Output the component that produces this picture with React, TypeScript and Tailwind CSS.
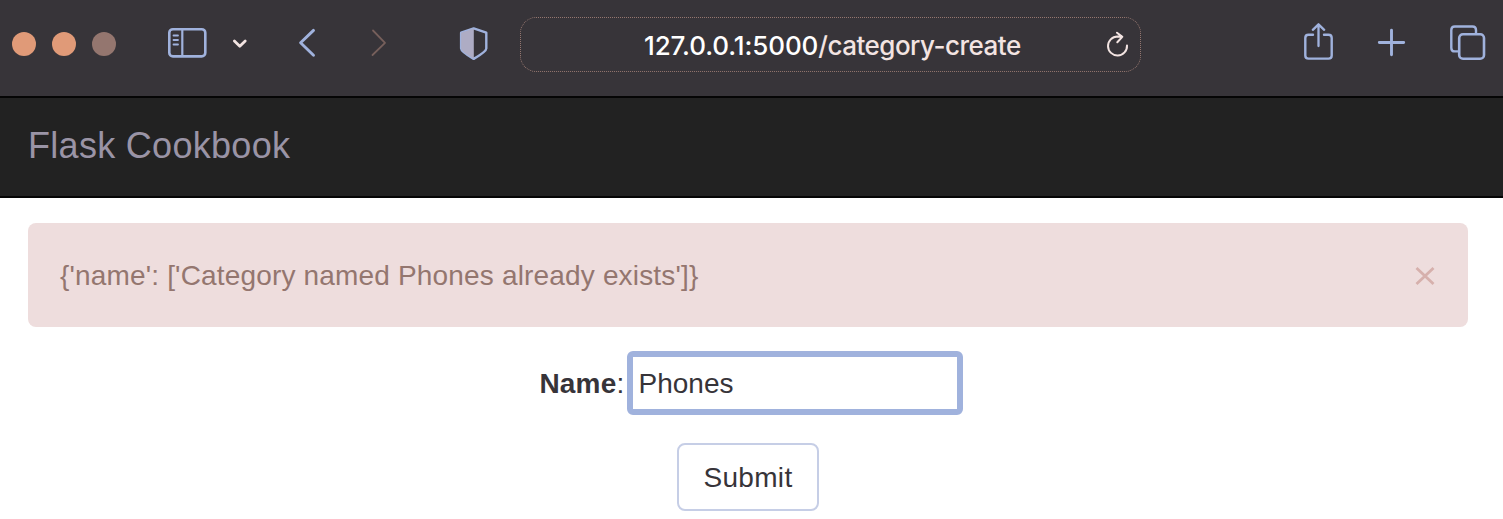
import React from "react";

type GlyphProps = {
  viewBox: string;
  className: string;
  label: string;
  children: React.ReactNode;
};

function Glyph({ viewBox, className, label, children }: GlyphProps) {
  return (
    <svg
      viewBox={viewBox}
      className={`h-[96px] shrink-0 ${className}`}
      fill="none"
      stroke="currentColor"
      strokeLinecap="round"
      strokeLinejoin="round"
      aria-label={label}
    >
      {children}
    </svg>
  );
}

function Toolbar() {
  return (
    <header className="flex h-[96px] items-center bg-[#373439] text-[#a0b2dd]">
      <div className="ml-3 flex -translate-y-1 gap-4">
        <span className="size-6 rounded-full bg-[#e09a78]" />
        <span className="size-6 rounded-full bg-[#e09a78]" />
        <span className="size-6 rounded-full bg-[#94766f]" />
      </div>
      <Glyph label="Sidebar" viewBox="160 0 56 96" className="ml-[44px] w-[56px]">
        <rect x="169.3" y="29.2" width="36" height="27.2" rx="3.6" strokeWidth="2.6" />
        <path d="M182.3 30v26" strokeWidth="2.2" />
        <path d="M173.5 35.5h4.5M173.5 40h4.5M173.5 44.5h4.5" strokeWidth="1.8" />
      </Glyph>
      <Glyph label="Tab groups" viewBox="216 0 48 96" className="w-[48px] text-[#f3e4e2]">
        <path d="M234.4 41l5.4 5.3 5.4-5.3" strokeWidth="2.8" />
      </Glyph>
      <Glyph label="Back" viewBox="280 0 60 96" className="ml-4 w-[60px]">
        <path d="M313.5 30.4L300.6 42.8 313.5 55.2" strokeWidth="2.9" />
      </Glyph>
      <Glyph label="Forward" viewBox="340 0 80 96" className="w-[80px] text-[#765f5b]">
        <path d="M373 30.5L385 42.8 372.5 55" strokeWidth="1.8" />
      </Glyph>
      <Glyph label="Privacy report" viewBox="440 0 60 96" className="ml-5 w-[60px]">
        <path d="M473.7 28.4L486.3 32.7V48.5q0 3-12.6 10.4Q461.1 51.5 461.1 48.5V32.7z" strokeWidth="2.4" />
        <path d="M473.8 28.6V58.7Q461.2 51.5 461.2 48.5V32.7z" fill="#aeacc4" stroke="none" />
      </Glyph>
      <div className="mb-[7px] ml-5 flex h-[55px] w-[621px] shrink-0 items-center rounded-2xl border border-dotted border-[#94766f]">
        <span className="ml-[123px] w-[378px] translate-y-px whitespace-nowrap font-['Inter','Liberation_Sans',sans-serif] text-[26px] font-medium leading-9 text-[#f3e4e2]">
          <span className="tracking-[-0.1px] text-white">127.0.0.1:5000</span>
          <span className="tracking-[-0.5px]">/category-create</span>
        </span>
        <svg viewBox="1100 24 36 40" className="ml-[78px] h-[40px] w-[36px] text-[#f3e4e2]" fill="none" stroke="currentColor" strokeWidth="2" strokeLinecap="round" strokeLinejoin="round" aria-label="Reload">
          <path d="M1127 44.5A9.5 9.5 0 1 1 1117.5 35.500L1122.300 35.700M1117 31.700L1122.300 35.900 1117.300 41.200" />
        </svg>
      </div>
      <Glyph label="Share" viewBox="1290 0 56 96" className="ml-[149px] w-[56px]">
        <path d="M1313 34.8h-4.5q-3.200 0-3.200 3.200v17.400q0 3.200 3.200 3.200h20q3.200 0 3.200-3.200V38q0-3.200-3.200-3.200h-4.500" strokeWidth="2.4" />
        <path d="M1318.5 46V25M1312.800 29.800l5.700-5.500 5.700 5.500" strokeWidth="2.3" />
      </Glyph>
      <Glyph label="New tab" viewBox="1366 0 50 96" className="ml-5 w-[50px]">
        <path d="M1379.3 42.5h24.400M1391.500 30.300v24.400" strokeWidth="2.9" />
      </Glyph>
      <Glyph label="Tab overview" viewBox="1440 0 50 96" className="ml-6 w-[50px]">
        <path d="M1458 51.4h-3.200q-3.500 0-3.500-3.500V30q0-3.500 3.500-3.500h17.700q3.500 0 3.500 3.500v3" strokeWidth="2.4" />
        <rect x="1459.2" y="34.2" width="24.8" height="24.6" rx="3.8" strokeWidth="2.6" />
      </Glyph>
    </header>
  );
}

export default function App() {
  return (
    <div className="h-[519px] overflow-hidden bg-white font-['Liberation_Sans',Arial,sans-serif] text-[28px] text-[#373439]">
      <Toolbar />
      <nav className="flex h-[102px] items-center border-y-2 border-[#050505] bg-[#222222] pb-0.5 pl-[28px]">
        <a className="whitespace-nowrap text-[36px] leading-10 tracking-[0.3px] text-[#9a94a6]">Flask Cookbook</a>
      </nav>
      <main className="ml-[28px] mr-[35px] mt-[25px]">
        <div className="flex h-[104px] items-center justify-between rounded-lg bg-[#eedddd] pl-[32px] pr-[33px] pt-0.5 text-[#94766f]">
          <span className="whitespace-nowrap tracking-[0.17px]">{"{'name': ['Category named Phones already exists']}"}</span>
          <svg viewBox="0 0 20 20" className="size-5 text-[#d6b0ac]" fill="none" stroke="currentColor" strokeWidth="2.8" aria-label="Close">
            <path d="M1.5 2l17 16M18.5 2L1.5 18" />
          </svg>
        </div>
        <form className="mt-6 flex flex-col items-center" onSubmit={(e) => e.preventDefault()}>
          <div className="mr-[-8px] flex w-[427px] items-center">
            <label htmlFor="name" className="w-[88px] shrink-0 whitespace-nowrap pl-px pt-0.5 leading-10 tracking-[0.15px]">
              <strong>Name</strong>:
            </label>
            <input id="name" defaultValue="Phones" className="h-[64px] w-[336px] shrink-0 rounded-md border-[6px] border-[#a0b2dd] bg-white pl-[6px] pt-0.5 outline-none" />
          </div>
          <button className="mt-[28px] h-[68px] w-[142px] rounded-lg border-2 border-[#c6cee6] bg-white pt-0.5 tracking-[0.3px]">Submit</button>
        </form>
      </main>
    </div>
  );
}
